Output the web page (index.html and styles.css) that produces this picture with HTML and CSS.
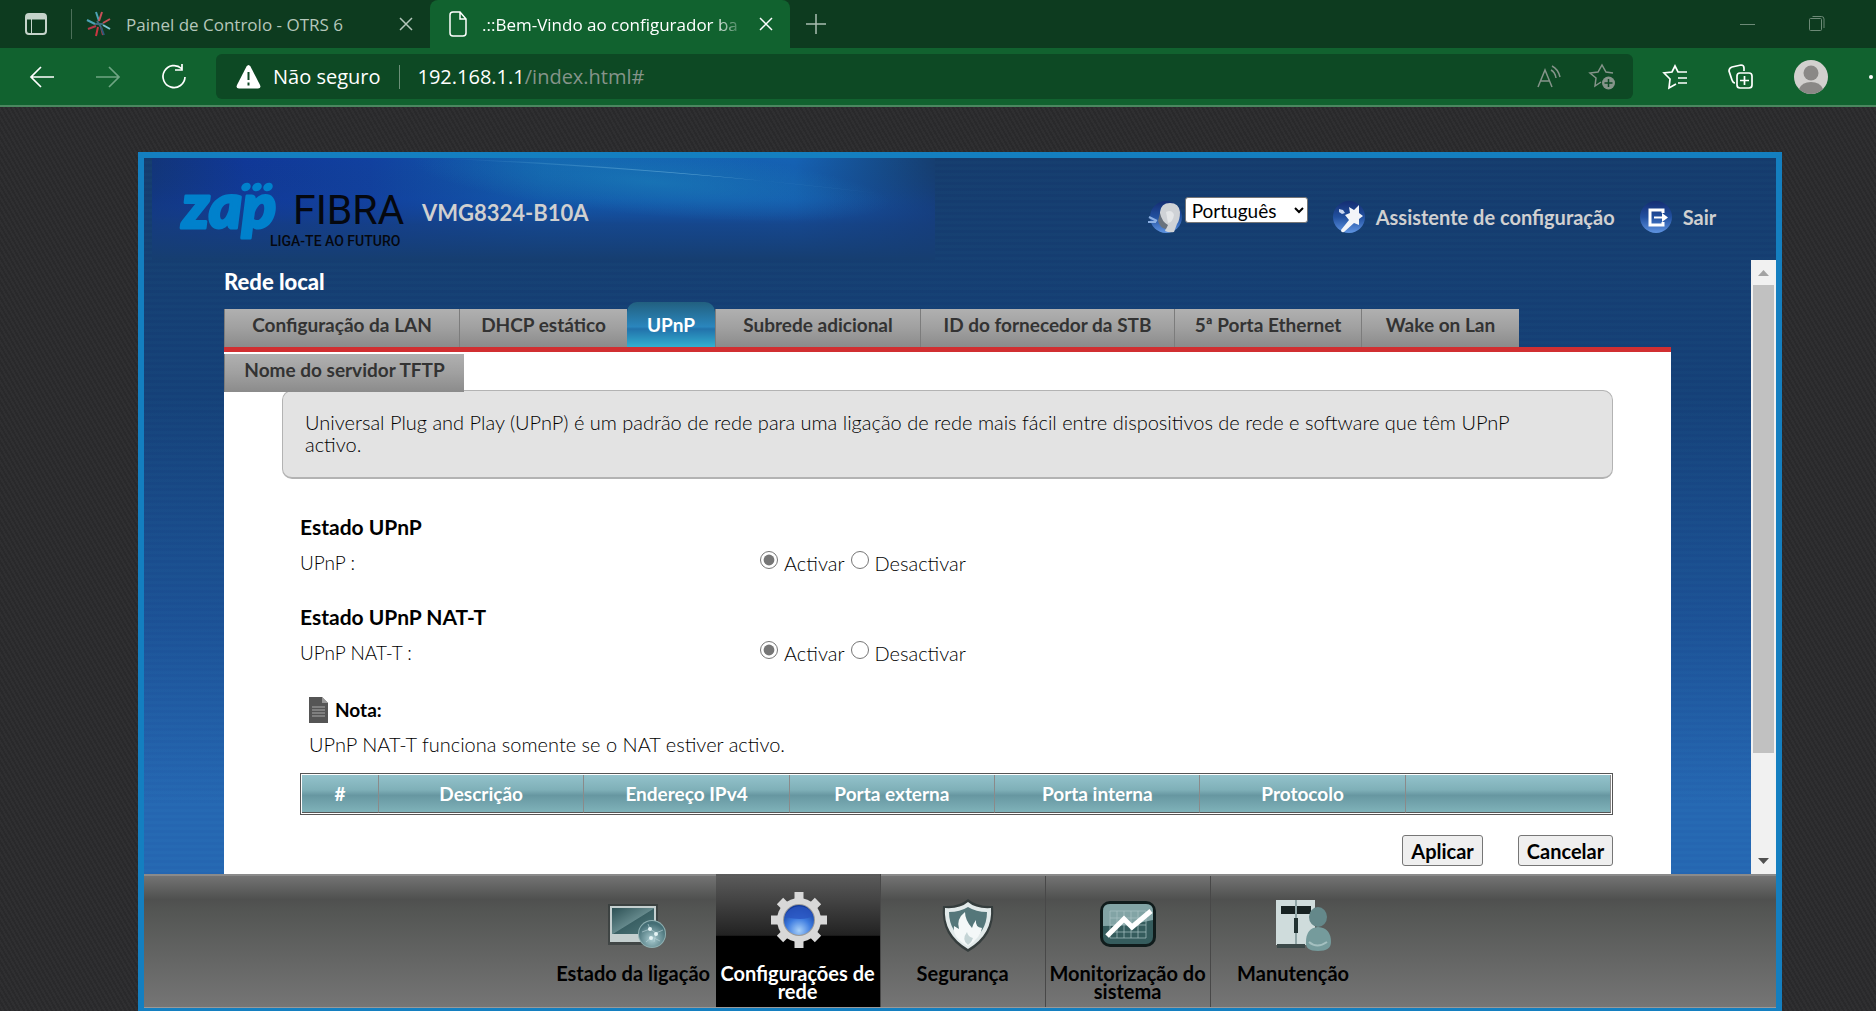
FILE: index.html
```html
<!DOCTYPE html>
<html lang="pt">
<head>
<meta charset="utf-8">
<title>.::Bem-Vindo ao configurador baseado na web::.</title>
<link rel="stylesheet" href="styles.css">
</head>
<body>
<header class="browser">
  <div class="tabstrip">
    <button class="icon-btn tab-actions" aria-label="Menu de separadores">
      <svg width="22" height="24" viewBox="0 0 22 24" fill="none" stroke="#c5d3ca" stroke-width="2"><rect x="1" y="2" width="20" height="20" rx="3"/><path d="M2 5h18" stroke-width="5"/><path d="M6.500 7v15" stroke-width="1"/></svg>
    </button>
    <span class="strip-divider"></span>
    <div class="tab">
      <svg width="26" height="26" viewBox="0 0 26 26" fill="none" stroke-width="2"><path d="M13 10L10 1M9 13L1 9" stroke="#4da3b5"/><path d="M13 10L16 1M17 12L24 8" stroke="#c95058"/><path d="M10 15L2 18M15 16L17 24" stroke="#b5384a"/><path d="M17 14L24 18" stroke="#7fc4d6"/><path d="M12 16L10 25" stroke="#c93642"/><path d="M15 16L18 24" stroke="#2c5a78"/><path d="M9 13h8M11 10l4 6" stroke="#3e6c7d"/></svg>
      <span class="tab-title">Painel de Controlo - OTRS 6</span>
      <button class="icon-btn" aria-label="Fechar separador"><svg width="14" height="14" viewBox="0 0 14 14" stroke="#b5c7bb" stroke-width="1.500"><path d="M1 1l12 12M13 1L1 13"/></svg></button>
    </div>
    <div class="tab tab-active">
      <svg width="20" height="26" viewBox="0 0 20 26" fill="none" stroke="#fff" stroke-width="1.500"><path d="M2 4q0-3 3-3h7l6 7v14q0 3-3 3H5q-3 0-3-3zM12 1v7h6"/></svg>
      <span class="tab-title">.::Bem-Vindo ao configurador ba</span>
      <button class="icon-btn" aria-label="Fechar separador"><svg width="14" height="14" viewBox="0 0 14 14" stroke="#fff" stroke-width="1.500"><path d="M1 1l12 12M13 1L1 13"/></svg></button>
    </div>
    <button class="icon-btn new-tab" aria-label="Novo separador"><svg width="22" height="22" viewBox="0 0 22 22" stroke="#a9beb1" stroke-width="1.500"><path d="M11 1v20M1 11h20"/></svg></button>
    <div class="window-controls">
      <button class="icon-btn" aria-label="Minimizar"><svg width="15" height="16" viewBox="0 0 15 16" stroke="#6d8a77"><path d="M0 8.500h15"/></svg></button>
      <button class="icon-btn" aria-label="Restaurar"><svg width="16" height="16" viewBox="0 0 16 16" fill="none" stroke="#6d8a77"><rect x=".5" y="2.500" width="12" height="12" rx="1"/><path d="M3.500.5h9q2.500 0 2.500 2.500v9"/></svg></button>
    </div>
  </div>
  <div class="toolbar">
    <button class="icon-btn" aria-label="Retroceder"><svg width="26" height="24" viewBox="0 0 26 24" fill="none" stroke="#fff" stroke-width="1.700"><path d="M25 12H2M12 2L2 12l10 10"/></svg></button>
    <button class="icon-btn" aria-label="Avançar"><svg width="26" height="24" viewBox="0 0 26 24" fill="none" stroke="#6fa583" stroke-width="1.700"><path d="M1 12h23M14 2l10 10-10 10"/></svg></button>
    <button class="icon-btn" aria-label="Atualizar"><svg width="26" height="26" viewBox="0 0 26 26" fill="none" stroke="#fff" stroke-width="1.700"><path d="M20.500 4.500A11 11 0 1 0 24 13M21 0v6h-7"/></svg></button>
    <div class="address">
      <svg width="25" height="24" viewBox="0 0 25 24"><path d="M10.500 1.500q2-3 4 0L24 20q1.500 3.500-2 3.500H3Q-.500 23.500 1 20z" fill="#fff"/><path d="M12.500 7v8M12.500 17.500v3" stroke="#0d4924" stroke-width="2"/></svg>
      <span class="insecure">Não seguro</span>
      <span class="address-divider"></span>
      <span class="url">192.168.1.1<span class="url-path">/index.html#</span></span>
      <span class="address-icons">
        <svg width="26" height="24" viewBox="0 0 26 24" fill="none" stroke="#85948a" stroke-width="1.500"><path d="M1 22L8 5l7 17M4 16h8M14 5q4 2 5 8M15 1q6 3 8 11"/></svg>
        <svg width="28" height="28" viewBox="0 0 28 28" fill="none" stroke="#85948a" stroke-width="1.500"><path d="M12 19l-6 4 1-8-6-5 8-1 4-7 4 7 7 1"/><circle cx="19.500" cy="20" r="6.500" fill="#85948a" stroke="none"/><path d="M19.500 16v8M15.500 20h8" stroke="#0d4924"/></svg>
      </span>
    </div>
    <div class="toolbar-icons">
      <button class="icon-btn" aria-label="Favoritos"><svg width="26" height="26" viewBox="0 0 26 26" fill="none" stroke="#fff" stroke-width="1.700"><path d="M14 20l-7 4 1-9-6-6 8-1 3-6 3 6h9M16 14h9M16 19h9"/></svg></button>
      <button class="icon-btn" aria-label="Coleções"><svg width="26" height="26" viewBox="0 0 26 26" fill="none" stroke="#fff" stroke-width="1.700"><path d="M7 19q-2 0-3-3L1 7q0-3 3-4l9-2q3 0 3 3v3"/><rect x="9" y="9" width="15" height="15" rx="3"/><path d="M16.500 12v9M12 16.500h9"/></svg></button>
      <button class="icon-btn" aria-label="Perfil"><svg width="34" height="34" viewBox="0 0 34 34"><circle cx="17" cy="17" r="17" fill="#d2d0ce"/><circle cx="17" cy="13" r="7.500" fill="#8a8886"/><path d="M5 29q3-7 12-7t12 7a17 17 0 0 1-24 0z" fill="#8a8886"/></svg></button>
    </div>
    <button class="icon-btn more" aria-label="Definições e mais"><svg width="26" height="6" viewBox="0 0 26 6" fill="#fff"><circle cx="3" cy="3" r="2"/><circle cx="12" cy="3" r="2"/><circle cx="21" cy="3" r="2"/></svg></button>
  </div>
</header>

<div class="router">
  <header class="masthead">
    <svg class="banner" viewBox="0 0 784 102" preserveAspectRatio="none" aria-hidden="true">
      <defs>
        <linearGradient id="bl" x1="0" x2="1" y1="0" y2="0"><stop offset="0" stop-color="#12357a"/><stop offset=".12" stop-color="#103898"/><stop offset=".28" stop-color="#1141a0"/><stop offset=".5" stop-color="#1260ae"/><stop offset=".82" stop-color="#1562b4"/><stop offset="1" stop-color="#163e70"/></linearGradient>
        <linearGradient id="fd" x1="0" x2="0" y1="0" y2="1"><stop offset="0" stop-color="#163e70" stop-opacity="0"/><stop offset=".4" stop-color="#14409a" stop-opacity=".25"/><stop offset=".65" stop-color="#163e80" stop-opacity=".75"/><stop offset="1" stop-color="#163e70"/></linearGradient>
        <linearGradient id="sk" x1="0" x2="1" y1="0" y2="0"><stop offset="0" stop-color="#4a9ad0" stop-opacity="0"/><stop offset=".6" stop-color="#6ab0da" stop-opacity=".75"/><stop offset="1" stop-color="#3a80c0" stop-opacity="0"/></linearGradient>
        <radialGradient id="sw"><stop offset="0" stop-color="#1b84bc" stop-opacity=".55"/><stop offset="1" stop-color="#1b84bc" stop-opacity="0"/></radialGradient>
      </defs>
      <rect width="784" height="102" fill="url(#bl)"/>
      <rect width="784" height="102" fill="url(#fd)"/>
      <ellipse cx="500" cy="24" rx="240" ry="34" fill="url(#sw)" transform="rotate(5 500 24)"/>
      <path d="M280 0Q480 6 740 37Q560 14 280 0z" fill="url(#sk)"/>
    </svg>
    <div class="brand">
      <svg class="logo" width="226" height="66" viewBox="0 0 226 66" role="img" aria-label="Zap Fibra, liga-te ao futuro">
        <g fill="#0081cc"><text class="logo-zap" x="1" y="46">zap</text><ellipse cx="65" cy="5" rx="5" ry="4" transform="rotate(-30 65 5)"/><ellipse cx="76" cy="5" rx="5" ry="4" transform="rotate(-30 76 5)"/><ellipse cx="87" cy="5" rx="5" ry="4" transform="rotate(-30 87 5)"/></g>
        <g fill="#05080f"><text class="logo-fibra" x="112" y="42">FIBRA</text><text class="logo-tag" x="89" y="64">LIGA-TE AO FUTURO</text></g>
      </svg>
      <h1 class="model">VMG8324-B10A</h1>
    </div>
    <div class="tools">
      <label class="language">
        <svg width="34" height="34" viewBox="0 0 34 34" aria-hidden="true"><defs><linearGradient id="orb" x1="0" x2="0" y1="0" y2="1"><stop offset="0" stop-color="#142d72"/><stop offset=".5" stop-color="#21509f"/><stop offset="1" stop-color="#5f94e2"/></linearGradient></defs><circle cx="18" cy="17" r="16" fill="url(#orb)"/><path d="M12 12Q13 3 22 3t10 9q0 8-3 12l-3 8q-5 1-9-1l2-6q-6-2-7-6z" fill="#cfd2d6"/><path d="M12 13l-2 8q2 7 8 8l2-4q-6-3-8-12z" fill="#69727d"/><path d="M18 12q6-3 8 3-1 7-6 8z" fill="#e4e6e8"/><path d="M1 17l8 4M0 22h8" stroke="#8cb0e4" stroke-width="2"/></svg>
        <select aria-label="Idioma"><option>Português</option></select>
      </label>
      <a href="#" class="tool">
        <svg width="34" height="34" viewBox="0 0 34 34" aria-hidden="true"><circle cx="17" cy="17" r="16" fill="url(#orb)"/><path d="M17 7l5 3 5-5v8l4 3-4 3v6l-5-2-10 9q-3 1-3-2l8-10-4-5 5-2z" fill="#f2f4f8"/><path d="M7 9l4 1 2 3-3 1-3-2z" fill="#c8d6f0"/></svg>
        Assistente de configuração</a>
      <a href="#" class="tool">
        <svg width="34" height="34" viewBox="0 0 34 34" aria-hidden="true"><circle cx="17" cy="17" r="16" fill="url(#orb)"/><path d="M24 13v-3H11v15h13v-3" fill="none" stroke="#fff" stroke-width="3"/><path d="M15 17.500h10" stroke="#fff" stroke-width="2"/><path d="M23 13l6 4.500-6 4.500z" fill="#fff"/></svg>
        Sair</a>
    </div>
  </header>

  <div class="viewport">
    <main class="content">
      <h2 class="page-title">Rede local</h2>
      <nav class="tabs">
        <a href="#">Configuração da LAN</a>
        <a href="#">DHCP estático</a>
        <a href="#" class="current">UPnP</a>
        <a href="#">Subrede adicional</a>
        <a href="#">ID do fornecedor da STB</a>
        <a href="#">5ª Porta Ethernet</a>
        <a href="#">Wake on Lan</a>
      </nav>
      <section class="panel">
        <nav class="tabs tabs-overflow"><a href="#">Nome do servidor TFTP</a></nav>
        <p class="info">Universal Plug and Play (UPnP) é um padrão de rede para uma ligação de rede mais fácil entre dispositivos de rede e software que têm UPnP activo.</p>
        <form class="settings">
          <h3>Estado UPnP</h3>
          <div class="field">
            <span>UPnP :</span>
            <div class="options">
              <input type="radio" name="upnp" id="upnp-on" checked><label for="upnp-on">Activar</label>
              <input type="radio" name="upnp" id="upnp-off"><label for="upnp-off">Desactivar</label>
            </div>
          </div>
          <h3>Estado UPnP NAT-T</h3>
          <div class="field">
            <span>UPnP NAT-T :</span>
            <div class="options">
              <input type="radio" name="natt" id="natt-on" checked><label for="natt-on">Activar</label>
              <input type="radio" name="natt" id="natt-off"><label for="natt-off">Desactivar</label>
            </div>
          </div>
          <div class="note">
            <h4><svg width="19" height="26" viewBox="0 0 19 26" aria-hidden="true"><path d="M0 0h13l6 6v20H0z" fill="#555"/><path d="M13 0v6h6z" fill="#999"/><path d="M3 10h13M3 13h13M3 16h13M3 19h13" stroke="#aaa"/></svg>Nota:</h4>
            <p>UPnP NAT-T funciona somente se o NAT estiver activo.</p>
          </div>
          <table class="mappings">
            <colgroup><col class="col-index"><col><col><col><col><col><col></colgroup>
            <thead><tr><th>#</th><th>Descrição</th><th>Endereço IPv4</th><th>Porta externa</th><th>Porta interna</th><th>Protocolo</th><th></th></tr></thead>
          </table>
          <div class="actions">
            <button type="submit">Aplicar</button>
            <button type="reset">Cancelar</button>
          </div>
        </form>
      </section>
    </main>
    <div class="scrollbar" aria-hidden="true">
      <svg width="25" height="25" viewBox="0 0 25 25"><path d="M7 16h11l-5.500-6z" fill="#a3a3a3"/></svg>
      <div class="track"><div class="thumb"></div></div>
      <svg width="25" height="25" viewBox="0 0 25 25"><path d="M7 9h11l-5.500 6z" fill="#505050"/></svg>
    </div>
  </div>

  <nav class="dock">
    <a href="#">
      <svg width="64" height="64" viewBox="0 0 64 64" aria-hidden="true"><defs><linearGradient id="teal" x1="0" x2="1" y1="0" y2="1"><stop offset="0" stop-color="#2c5054"/><stop offset=".5" stop-color="#64888b"/><stop offset=".52" stop-color="#3a6064"/><stop offset="1" stop-color="#4d7578"/></linearGradient><radialGradient id="globe" cx=".5" cy=".7" r=".6"><stop offset="0" stop-color="#a9cbd0"/><stop offset="1" stop-color="#446e75"/></radialGradient></defs><path d="M7 12h50v41H7z" fill="#2d3636" opacity=".6"/><path d="M9 14h46v36H9z" fill="#c4cfcf"/><path d="M11 16h42v26H11z" fill="url(#teal)"/><circle cx="51" cy="42" r="14" fill="#8fb0b2"/><circle cx="51" cy="42" r="13" fill="url(#globe)"/><path d="M41 40l8-3 6 4 7-3M45 50l6-5 8 4M47 32l2 5M55 41l-2 9" stroke="#bcd6da" fill="none" opacity=".6"/><g fill="#e5f4f5"><circle cx="49" cy="37" r="2"/><circle cx="55" cy="42" r="2"/><circle cx="50" cy="46" r="2"/></g></svg>
      <span>Estado da ligação</span></a>
    <a href="#" class="current">
      <svg width="64" height="64" viewBox="0 0 64 64" aria-hidden="true"><defs><radialGradient id="gem" cx=".5" cy=".85" r=".8"><stop offset="0" stop-color="#a8d0f8"/><stop offset=".5" stop-color="#3e7ce0"/><stop offset="1" stop-color="#123a9a"/></radialGradient></defs><g stroke="#d8d8d8" stroke-width="9"><path d="M33 0v56M5 28h56M14 9l38 38M52 9L14 47"/></g><circle cx="33" cy="28" r="22" fill="#d8d8d8"/><circle cx="33" cy="28" r="16" fill="#9a9a9a"/><circle cx="33" cy="28" r="15" fill="url(#gem)"/><path d="M19 25a15 15 0 0 1 28-2q-7 7-28 2z" fill="#2a55c0" opacity=".8"/></svg>
      <span>Configurações de rede</span></a>
    <a href="#">
      <svg width="64" height="64" viewBox="0 0 64 64" aria-hidden="true"><path d="M37 7q9 8 25 7 3 30-25 46Q9 44 12 14q16 1 25-7z" fill="#353d3d"/><path d="M37 10q8 7 23 6 2 26-23 41Q12 42 14 16q15 1 23-6z" fill="#e2eaea"/><path d="M37 15q8 5 19 5 0 20-19 32-19-12-19-32 11 0 19-5z" fill="#55777a"/><path d="M37 54q-16-8-14-20l5 3q-3-10 6-17 0 8 7 16 1-4 4-8-1 7 6 8-1 9-14 18z" fill="#f4f8f8"/><path d="M37 53q-7-5-1-13 1 5 6 6-1 4-5 7z" fill="#c4d4d5"/></svg>
      <span>Segurança</span></a>
    <a href="#">
      <svg width="64" height="64" viewBox="0 0 64 64" aria-hidden="true"><rect x="4" y="9" width="56" height="46" rx="10" fill="#101c1c"/><rect x="7" y="12" width="50" height="40" rx="7" fill="#355c5d"/><path d="M7 34V19q0-7 7-7h36q7 0 7 7v9Q32 34 7 34z" fill="#82a4a5"/><path d="M14 19h36v27H14zM14 26h36M14 33h36M14 40h36M21 19v27M28 19v27M35 19v27M42 19v27" fill="none" stroke="#a9c2c3" opacity=".7"/><path d="M11 44l17-17 8 8 19-16" fill="none" stroke="#fff" stroke-width="5"/></svg>
      <span>Monitorização do sistema</span></a>
    <a href="#">
      <svg width="64" height="64" viewBox="0 0 64 64" aria-hidden="true"><path d="M15 8h39v45H15z" fill="#cfdcdc"/><path d="M20 14h30v8H20z" fill="#172222"/><path d="M35 8v45" stroke="#8fa5a6" stroke-width="2"/><path d="M33 26h4v15h-4z" fill="#233"/><path d="M16 52h28v4H16z" fill="#3c4a4a"/><ellipse cx="57" cy="25" rx="9" ry="10" fill="#64888a"/><path d="M45 50q0-14 12-15 13 1 13 15 0 9-13 9T45 50z" fill="#759b9c"/><path d="M48 50q8 7 18 0" fill="none" stroke="#a4c0c0" stroke-width="2"/></svg>
      <span>Manutenção</span></a>
  </nav>
</div>
</body>
</html>
```

FILE: styles.css
```css
* { box-sizing: border-box; }

body {
  margin: 0;
  height: 100vh;
  display: flex;
  flex-direction: column;
  overflow: hidden;
  background: repeating-linear-gradient(60deg, #29292b 0 2px, #2f2f31 2px 4px);
  font-family: Lato, "Open Sans", sans-serif;
  font-size: 20px;
  color: #000;
}

h1, h2, h3, h4, p { margin: 0; }
a { color: inherit; text-decoration: none; }
svg { flex: none; display: block; overflow: visible; }

/* Browser window */
.browser {
  flex: none;
  font-family: "Open Sans", "Noto Sans", sans-serif;
  border-bottom: 2px solid #4a875f;
  background: #11622f;
}
.icon-btn {
  flex: none;
  display: flex;
  padding: 0;
  border: 0;
  background: none;
}
.tabstrip {
  display: flex;
  align-items: center;
  height: 48px;
  background: #0d3b1f;
  color: #b5c7bb;
  font-size: 17px;
}
.tab-actions { margin-left: 25px; }
.strip-divider { width: 1px; height: 30px; margin-left: 24px; background: #4c6f59; }
.tab {
  display: flex;
  align-items: center;
  gap: 14px;
  width: 358px;
  height: 48px;
  padding: 0 17px 0 14px;
}
.tab-title { flex: 1; white-space: nowrap; }
.tab-active {
  width: 360px;
  padding-left: 18px;
  border-radius: 8px 8px 0 0;
  background: #11622f;
  color: #fff;
}
.tab-active .tab-title {
  mask-image: linear-gradient(to right, #000 88%, transparent);
}
.new-tab { margin-left: 15px; }
.window-controls { display: flex; gap: 54px; margin-left: auto; padding-right: 51px; }

.toolbar {
  display: flex;
  align-items: center;
  height: 57px;
  padding-left: 29px;
  gap: 40px;
}
.address {
  flex: 1;
  display: flex;
  align-items: center;
  height: 45px;
  margin-left: -11px;
  padding: 0 16px 0 20px;
  border-radius: 6px;
  background: #0d4924;
  color: #fff;
  font-size: 20px;
}
.insecure { margin-left: 12px; }
.address-divider { width: 1px; height: 24px; margin: 0 18px; background: #6c9079; }
.url-path { color: #85948a; }
.address-icons { display: flex; align-items: center; gap: 26px; margin-left: auto; }
.toolbar-icons { display: flex; align-items: center; gap: 40px; margin-left: -11px; }
.more { width: 8px; overflow: hidden; }

/* Router frame */
.router {
  flex: 1;
  min-height: 0;
  display: flex;
  flex-direction: column;
  margin: 45px 5% -3px 138px;
  border: 6px solid #147fc0;
  background:
    repeating-linear-gradient(rgba(0, 40, 130, .03) 0 3px, rgba(40, 140, 190, .03) 3px 6px),
    linear-gradient(#163c6c, #164178 28%, #1d5397 55%, #2668b3 76%);
}
.masthead {
  position: relative;
  flex: none;
  display: flex;
  justify-content: space-between;
  height: 102px;
  padding: 24px 60px 0 37px;
  color: #d0d0d0;
}
.banner { position: absolute; left: 8px; top: 0; width: 48%; height: 102px; overflow: hidden; }
.brand { position: relative; display: flex; gap: 15px; }
.logo-zap { font: italic 900 63px Lato, sans-serif; stroke: #0081cc; stroke-width: 3px; stroke-linejoin: round; }
.logo-fibra { font: 41px Roboto, sans-serif; }
.logo-tag { font: 500 14px Roboto, sans-serif; }
.model { padding-top: 16px; font-size: 22px; line-height: 30px; }
.tools { display: flex; gap: 24px; height: 34px; margin-top: 18px; font-weight: 700; }
.language { display: flex; gap: 3px; }
.language select {
  width: 123px;
  height: 26px;
  margin-top: -3px;
  padding: 0 2px;
  border: 1px solid #767676;
  border-radius: 3px;
  background: #fff;
  color: #000;
  font: 19px Lato, sans-serif;
}
.tool { display: flex; align-items: center; gap: 10px; }

.viewport { flex: 1; min-height: 0; display: flex; }
.content {
  flex: 1;
  display: flex;
  flex-direction: column;
  padding: 0 80px;
}
.page-title {
  padding-top: 10px;
  height: 42px;
  color: #fff;
  font-size: 22px;
  font-weight: 900;
  line-height: 24px;
}
.tabs {
  display: grid;
  grid-template-columns: 235px 168px 88px 205px 254px 187px 158px;
  align-items: end;
  height: 45px;
  color: #333;
  font-size: 19px;
  font-weight: 700;
  line-height: 32px;
  text-align: center;
}
.tabs a {
  height: 38px;
  border-left: 1px solid #7c7c7c;
  background: linear-gradient(#b0b0b0, #a0a0a0 50%, #8b8b8b);
  white-space: nowrap;
}
.tabs .current {
  height: 45px;
  padding-top: 7px;
  border: 0;
  border-radius: 10px 10px 0 0;
  background: linear-gradient(#22607f, #2a86bd 55%, #2272ab 60%, #33b0cf);
  color: #fff;
}
.tabs-overflow {
  position: relative;
  grid-template-columns: 240px;
  height: 38px;
  margin-bottom: -2px;
}

.panel {
  flex: 1;
  padding-top: 2px;
  border-top: 5px solid #d12f31;
  background: #fff;
  color: #000;
  font-weight: 300;
}
.info {
  height: 89px;
  margin: 0 58px;
  padding: 20px 60px 20px 22px;
  border: 1px solid #b3b3b3;
  border-bottom-width: 2px;
  border-radius: 10px;
  background: #e3e3e3;
  line-height: 22px;
}
.settings { margin: 35px 58px 0 76px; }
.settings h3 { font-size: 21px; line-height: 26px; }
.field {
  display: grid;
  grid-template-columns: 459px 1fr;
  height: 64px;
  padding-top: 12px;
  line-height: 22px;
}
.field > span { font-size: 19px; }
.options { display: flex; }
.options input { width: 18px; height: 18px; margin: -1px 6px 0 1px; accent-color: #767676; }
.options label { margin-right: 5px; }
.note { padding: 0 9px; line-height: 22px; }
.note h4 { display: flex; align-items: center; gap: 7px; height: 32px; font-size: 19px; }
.note p { padding-top: 7px; }
.mappings {
  width: 100%;
  height: 42px;
  margin-top: 18px;
  padding: 1px;
  table-layout: fixed;
  border: 1px solid #555;
  border-spacing: 0;
  background: #fff;
  color: #fff;
  font-size: 19px;
}
.col-index { width: 77px; }
.mappings th {
  height: 38px;
  padding: 0;
  border-right: 1px solid #8a8a8a;
  border-bottom: 1px solid #555;
  background: linear-gradient(#93c2cb, #7fb0b8 40%, #6797a1 55%, #7fb2b9);
}
.actions { display: flex; justify-content: flex-end; gap: 35px; margin-top: 20px; }
.actions button {
  height: 31px;
  padding: 0 8px;
  border: 1px solid #767676;
  border-radius: 3px;
  background: #efefef;
  color: #000;
  font: 700 20px Lato, sans-serif;
}

.scrollbar { flex: none; display: flex; flex-direction: column; width: 25px; background: #f1f1f1; }
.track { flex: 1; padding: 0 2px; }
.thumb { height: 83%; background: #c1c1c1; }

/* Bottom navigation */
.dock {
  flex: none;
  display: flex;
  justify-content: center;
  height: 134px;
  padding-left: 6px;
  border-top: 2px solid #8a8a8a;
  border-bottom: 1px solid #999;
  background: linear-gradient(#737373, #4f504f 18%, #535553 25%, #757575);
  font-weight: 700;
  line-height: 18px;
  text-align: center;
}
.dock a {
  display: flex;
  flex-direction: column;
  align-items: center;
  gap: 8px;
  width: 165px;
  padding-top: 16px;
  border-right: 1px solid #484848;
}
.dock a:first-child, .dock a:last-child { border: 0; }
.dock .current {
  margin-top: -2px;
  padding-top: 18px;
  background: linear-gradient(#5c5c5c, #222 46%, #000 47%);
  color: #fff;
}
```
